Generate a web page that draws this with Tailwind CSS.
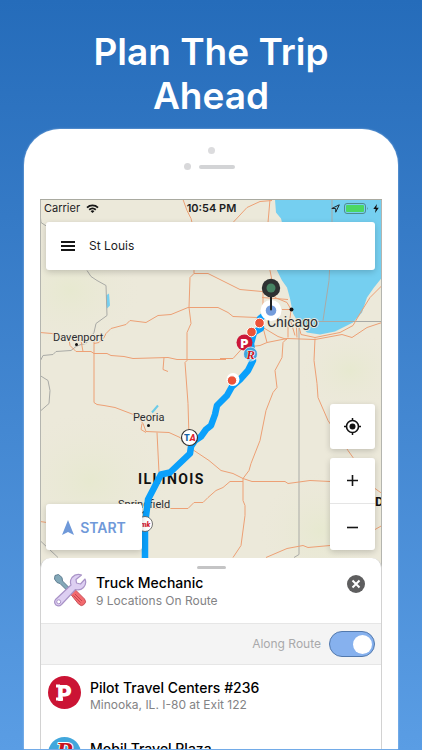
<!DOCTYPE html>
<html lang="en">
<head>
<meta charset="utf-8">
<meta name="viewport" content="width=device-width, initial-scale=1">
<title>Plan The Trip Ahead</title>
<script src="https://cdn.jsdelivr.net/npm/@tailwindcss/browser@4"></script>
</head>
<body class="font-['Inter',sans-serif] text-[#1c1c1e]">
<div class="flex h-screen flex-col overflow-hidden bg-linear-to-b from-[#256cba] to-[#5a9de4] pb-px">
  <h1 class="px-16 pt-[30px] text-center text-[37px] leading-[44px] font-semibold text-white">Plan The Trip Ahead</h1>

  <main class="mx-6 mt-[11px] flex min-h-0 flex-1 flex-col overflow-hidden rounded-t-[36px] bg-white px-4 shadow-[0_0_2px_#ffffff90]">
    <div class="flex h-[70px] shrink-0 flex-col items-center pt-[18px]" aria-hidden="true">
      <span class="size-[7px] rounded-full bg-[#dcdcde]"></span>
      <span class="mt-[9px] flex items-center gap-2 pr-1">
        <span class="size-[7px] rounded-full bg-[#d8d8da]"></span>
        <span class="h-[4px] w-9 rounded-full bg-[#d3d4d6]"></span>
      </span>
    </div>

    <section class="relative flex min-h-[369px] shrink-0 flex-col overflow-hidden border-t border-[#a9aaa0]" aria-label="Route map">
      <svg class="absolute inset-0 h-full w-full" viewBox="40 199 342 369" preserveAspectRatio="xMidYMid slice" font-family="Roboto, sans-serif" role="img" aria-label="Route through Illinois">
        <defs>
          <radialGradient id="land"><stop offset="0" stop-color="#e7e9d0"/><stop offset="1" stop-color="#ebe8d9" stop-opacity="0"/></radialGradient>
        </defs>
        <rect x="40" y="199" width="342" height="369" fill="#ece9da"/>
        <ellipse cx="70" cy="290" rx="70" ry="60" fill="url(#land)"/>
        <ellipse cx="90" cy="480" rx="80" ry="70" fill="url(#land)"/>
        <ellipse cx="320" cy="530" rx="60" ry="60" fill="url(#land)"/>
        <ellipse cx="350" cy="370" rx="50" ry="40" fill="url(#land)"/>
        <path d="M275 199L276 212L281 218L282 222L276 240L277 270L282 280L287 287L290 298L293 313L300 325L307 332L320 334L335 331L353 322L362 312L367 297L374 287L382 277V199Z" fill="#75cff0"/>
        <path d="M106 295l3-2 1 12-3 3-1-5z" fill="#75cff0"/>
        <path d="M152 412L158 405" stroke="#6bcbe8" stroke-width="2"/>
        <g fill="none" stroke="#a9aaa6" stroke-width="1">
          <path d="M40 213L41 222L47 226M87 270L91 276L97 280L106 285L107 315L96 323L94 332L86 343L81 344L76 346L71 350L56 351L53 354L43 355L40 361V375L48 380L50 390L49 403L41 410M40 540L58 557"/>
          <path d="M332 199V222L329 280L323 320M317 321H382M299 325V554L294 557"/>
        </g>
        <g fill="none" stroke="#eda075" stroke-width="1" stroke-linejoin="round">
          <path d="M40 332L52 333L68 338M69 339L70 345L76 351H91L94 353H107L111 355L124 356L133 358L168 357L177 359L226 359M220 358H233L243 347L260 345L267 342L287 338L315 339L342 334L352 337L367 327L382 322"/>
          <path d="M81 340L83 351M94 340V402L97 404L104 405L115 407L136 415L143 423L146 431L169 432L180 437L191 448L209 460L221 470L233 473L243 478L252 481H285L288 483L310 480L330 481"/>
          <path d="M94 343L99 342L104 337L106 333L111 328L126 324L130 320L146 322L158 315L171 314L188 307H218L228 312L233 316L257 317"/>
          <path d="M183 199L187 210L191 218L192 222L194 270V273L190 277L189 307L191 323L187 332V360L185 362L188 403L189 437M194 273H208L226 282L240 289L262 291"/>
          <path d="M164 357L163 369L168 371M157 432L159 472M142 423L141 429L146 432"/>
          <path d="M151 508H188L194 502L203 502L208 497L216 490L223 487L230 481H243"/>
          <path d="M287 338L283 342L282 357L275 370L277 387L273 392L266 410L260 440L251 463L249 470L243 478V500L245 505V515L241 545L233 557"/>
          <path d="M315 338L314 360L317 383L318 397L328 420L348 450L353 457L375 488L382 493M375 529L382 525M266 557L287 548L303 545L308 547L330 545M40 521L47 522"/>
          <path d="M299 326L301 334L315 337L340 332L353 325L360 313L370 297L382 285"/>
          <path d="M233 222L247 207L260 201L272 200M270 199L268 222L270 270L272 280L263 285V327L267 342M272 280L275 297L287 302L291 309L290 318L295 335M262 297L288 299M282 309H292M263 327L278 336L287 339M288 322V337M296 320L297 337"/>
        </g>
        <g fill="#2b2c30" stroke="#ece9da" stroke-width="2" paint-order="stroke" font-size="11">
          <text x="53" y="340">Davenport</text>
          <text x="133" y="420">Peoria</text>
          <text x="118" y="507">Springfield</text>
          <text x="267" y="326" font-size="14">Chicago</text>
          <text class="tracking-widest" x="138" y="483" font-size="14" font-weight="700" fill="#111">ILLINOIS</text>
          <text x="375" y="505" font-size="13" font-weight="700" fill="#111">D</text>
        </g>
        <g fill="#111"><circle cx="76.500" cy="344" r="1.500"/><circle cx="148.500" cy="425" r="1.500"/><circle cx="144" cy="512" r="1.500"/><circle cx="291.500" cy="309" r="2"/></g>
        <path d="M265 314L260 318L261 328L254 332L251 343L253 360L248 370L240 379L232 386L227 395L217 405L215 414L211 425L206 429L201 436L195 440L191 446L190 453L170 472L161 474L148 499L147 508L145 523V568" fill="none" stroke="#0aa0fb" stroke-width="6.500" stroke-linejoin="round"/>
        <circle cx="145" cy="523.500" r="7.500" fill="#fff" stroke="#555" stroke-width=".8"/>
        <text x="145.500" y="526.500" text-anchor="middle" font-size="7" font-weight="900" font-style="italic" fill="#d32232">mk</text>
        <circle cx="189.500" cy="437" r="8" fill="#fff" stroke="#333" stroke-width="1.200"/>
        <text y="440.500" x="184" font-size="9" font-weight="900" fill="#1765a8">T<tspan font-style="italic" fill="#e0242e">A</tspan></text>
        <circle cx="233" cy="379" r="6.500" fill="#fff"/><circle cx="232" cy="380" r="4.700" fill="#ec5238" stroke="#fff"/>
        <circle cx="244.500" cy="342" r="8" fill="#cb1739"/>
        <text x="244.500" y="347" text-anchor="middle" font-family="Inter, sans-serif" font-size="12" font-weight="900" fill="#fff">P</text>
        <circle cx="250.500" cy="353.500" r="7" fill="#42a4dc" stroke="#e9eef0" stroke-width=".8"/>
        <text x="250.500" y="358" text-anchor="middle" font-family="Liberation Serif, serif" font-size="13" font-weight="700" font-style="italic" fill="#c8141f" stroke="#fff" stroke-width="1.200" paint-order="stroke">R</text>
        <circle cx="271" cy="310" r="10.500" fill="#fff"/>
        <circle cx="251.500" cy="331.500" r="4.800" fill="#ec5238" stroke="#fff"/><circle cx="259.500" cy="322.500" r="4.800" fill="#ec5238" stroke="#fff"/>
        <circle cx="271" cy="310" r="5.300" fill="#739cdc"/>
        <path d="M271 290V309" stroke="#1e2022" stroke-width="2" stroke-linecap="round"/>
        <circle cx="271" cy="287.500" r="9.200" fill="#2e3132"/><circle cx="271" cy="287.500" r="4.500" fill="#468363"/>
        <path d="M40.500 199V568M381.500 199V568" stroke="#b4b5af"/>
      </svg>

      <div class="relative flex flex-1 flex-col pr-[7px] pb-[18px] pl-1.5">
        <div class="-mt-px -mr-1 -ml-0.5 grid h-[23px] grid-cols-3 items-center pb-1 text-[11px]">
          <span class="flex items-center gap-1.5">Carrier
            <svg class="h-[9px] w-[13px]" viewBox="0 0 13 9" aria-label="Wi-Fi"><path d="M1 3.600a8 8 0 0 1 11 0M3.200 5.800a5 5 0 0 1 6.600 0" fill="none" stroke="#151515" stroke-width="1.800"/><path d="M4.600 7.200a2.800 2.800 0 0 1 3.800 0L6.500 9z" fill="#151515"/></svg>
          </span>
          <time class="text-center font-semibold whitespace-nowrap">10:54 PM</time>
          <span class="flex items-center justify-end gap-1">
            <svg class="size-[9px]" viewBox="0 0 9 9" aria-label="Location"><path d="M.8 4.500L8.300.8L4.700 8.200V4.500Z" fill="none" stroke="#20262a" stroke-width="1"/></svg>
            <svg class="h-[11px] w-[25px]" viewBox="0 0 25 11" aria-label="Battery"><rect x=".5" y=".5" width="21" height="10" rx="2.500" fill="none" stroke="#508b8d"/><rect x="2" y="2" width="18" height="7" rx="1" fill="#4bd763"/><path d="M23 4v3q1.500-1.500 0-3" fill="#508b8d"/></svg>
            <svg class="h-[9px] w-[6px]" viewBox="0 0 6 9" aria-label="Charging"><path d="M4 0L.3 5H2.700L2 9L5.800 3.800H3.300Z" fill="#111"/></svg>
          </span>
        </div>

        <form class="flex h-12 items-center gap-3.5 rounded-[3px] bg-white px-[15px] shadow-[0_2px_6px_#0000002e]">
          <button type="button" aria-label="Menu"><svg class="h-[10px] w-[14px]" viewBox="0 0 14 10"><path d="M0 1H14M0 5H14M0 9H14" stroke="#161616" stroke-width="1.800"/></svg></button>
          <input aria-label="Starting point" class="min-w-0 flex-1 text-[12px] outline-none" type="text" value="St Louis">
        </form>

        <div class="mt-auto flex items-end justify-between">
          <button type="button" class="flex h-[46px] w-24 items-center justify-center gap-1.5 rounded-[3px] bg-white text-[14px] font-semibold text-[#6f99d9] shadow-[0_2px_6px_#0000002e]">
            <svg class="h-[15px] w-[12px]" viewBox="0 0 12 15"><path d="M6 0L12 15L6 12L0 15Z" fill="#6f99d9"/></svg>START
          </button>
          <div class="flex w-[45px] flex-col gap-[9px]">
            <button type="button" aria-label="My location" class="flex h-[45px] items-center justify-center rounded-[3px] bg-white shadow-[0_2px_6px_#0000002e]">
              <svg class="size-[17px]" viewBox="0 0 17 17"><circle cx="8.500" cy="8.500" r="6" fill="none" stroke="#111" stroke-width="1.600"/><circle cx="8.500" cy="8.500" r="3" fill="#111"/><path d="M8.500 0V3M8.500 14V17M0 8.500H3M14 8.500H17" stroke="#111" stroke-width="1.500"/></svg>
            </button>
            <div class="flex flex-col divide-y divide-[#e5e5e5] rounded-[3px] bg-white shadow-[0_2px_6px_#0000002e]">
              <button type="button" aria-label="Zoom in" class="flex h-[46px] items-center justify-center"><svg class="size-[11px]" viewBox="0 0 11 11"><path d="M0 5.500H11M5.500 0V11" stroke="#151515" stroke-width="1.600"/></svg></button>
              <button type="button" aria-label="Zoom out" class="flex h-[46px] items-center justify-center"><svg class="size-[11px]" viewBox="0 0 11 11"><path d="M0 5.500H11" stroke="#151515" stroke-width="1.600"/></svg></button>
            </div>
          </div>
        </div>
      </div>
    </section>

    <section class="relative -mt-2.5 shrink-0 rounded-t-[10px] border-x border-[#d2d2d2] bg-white">
      <div class="flex justify-center pt-2"><span class="h-[3px] w-[29px] rounded-full bg-[#c4c4c5]"></span></div>
      <header class="flex h-[54px] items-start gap-[9px] pr-4 pl-3">
        <svg class="mt-[4px] size-[34px] shrink-0" viewBox="0 0 34 34" aria-hidden="true">
          <path d="M2 2.500L5.500 1.500L9 4.500L9.500 8L17 15.500L14.500 18L7 10.500L4 9.500L1.500 6Z" fill="#84a9b9" stroke="#5f7e92"/>
          <path d="M17.500 21L22 16.500L31.500 26Q34 29 31 31.500Q28.500 34 25.500 31Z" fill="#f36a6e" stroke="#c9545c"/>
          <path d="M22 21L29 28M20.500 22.500L27.500 29.500" stroke="#c54450" stroke-width="1"/>
          <path d="M28.500 2Q23 0 19 4.500Q16.500 8 18 12L2.500 26.500Q.5 29.500 3 32Q6 34 8.500 31.500L22.500 16.500Q27 18 30.500 14.500Q34 10.500 32 6L27.500 11L23.500 10L23 6.500Z" fill="#ddcff2" stroke="#a993c7" stroke-width="1.200" stroke-linejoin="round"/>
          <circle cx="5.700" cy="28.800" r="2" fill="#fff" stroke="#a993c7"/>
        </svg>
        <div class="min-w-0 flex-1 pt-[4px]">
          <h2 class="text-[14px] leading-[19px] font-medium text-black">Truck Mechanic</h2>
          <p class="text-[12px] leading-[18px] text-[#838385]">9 Locations On Route</p>
        </div>
        <button type="button" aria-label="Close" class="mt-[6px]"><svg class="size-[18px]" viewBox="0 0 18 18"><circle cx="9" cy="9" r="9" fill="#5e5e5f"/><path d="M5.500 5.500L12.500 12.500M12.500 5.500L5.500 12.500" stroke="#fff" stroke-width="2"/></svg></button>
      </header>
      <div class="flex h-[42px] items-center justify-end gap-2 border-y border-[#e6e6e6] bg-[#f4f4f4] pr-1.5">
        <label for="along" class="text-[12px] text-[#a9a9ab]">Along Route</label>
        <input id="along" type="checkbox" role="switch" checked class="flex h-[26px] w-[46px] appearance-none items-center rounded-full border border-[#5279ad] bg-[#86b1ee] px-[2px] before:size-[19px] before:rounded-full before:bg-white checked:justify-end">
      </div>
      <ul>
        <li class="flex h-[61px] items-start gap-[9px] pt-[11px] pl-[7px]">
          <svg class="size-[33px] shrink-0" viewBox="0 0 33 33" aria-label="Pilot"><circle cx="16.500" cy="16.500" r="16.500" fill="#cb1434"/><text x="16.500" y="24.500" text-anchor="middle" font-family="Inter, sans-serif" font-size="22" font-weight="900" fill="#fff">P</text><path d="M8 8.500H12V11.500H8ZM8 21.500H15V24.500H8Z" fill="#fff"/></svg>
          <div class="pt-[2px]">
            <h3 class="text-[14px] leading-[19px] font-medium text-black">Pilot Travel Centers #236</h3>
            <p class="text-[12px] leading-[15px] text-[#838385]">Minooka, IL. I-80 at Exit 122</p>
          </div>
        </li>
        <li class="flex h-[61px] items-start gap-[9px] pt-[11px] pl-[7px]">
          <svg class="size-[33px] shrink-0" viewBox="0 0 33 33" aria-label="Road Ranger"><circle cx="16.500" cy="16.500" r="16.500" fill="#42a7dc"/><text x="16.500" y="24" text-anchor="middle" font-family="Liberation Serif, serif" font-size="27" font-weight="700" font-style="italic" fill="#c8141f" stroke="#fff" stroke-width="2" paint-order="stroke">R</text></svg>
          <div class="pt-[2px]">
            <h3 class="text-[14px] leading-[19px] font-medium text-black">Mobil Travel Plaza</h3>
            <p class="text-[12px] leading-[15px] text-[#838385]">Illinois</p>
          </div>
        </li>
      </ul>
    </section>
  </main>
</div>
</body>
</html>
